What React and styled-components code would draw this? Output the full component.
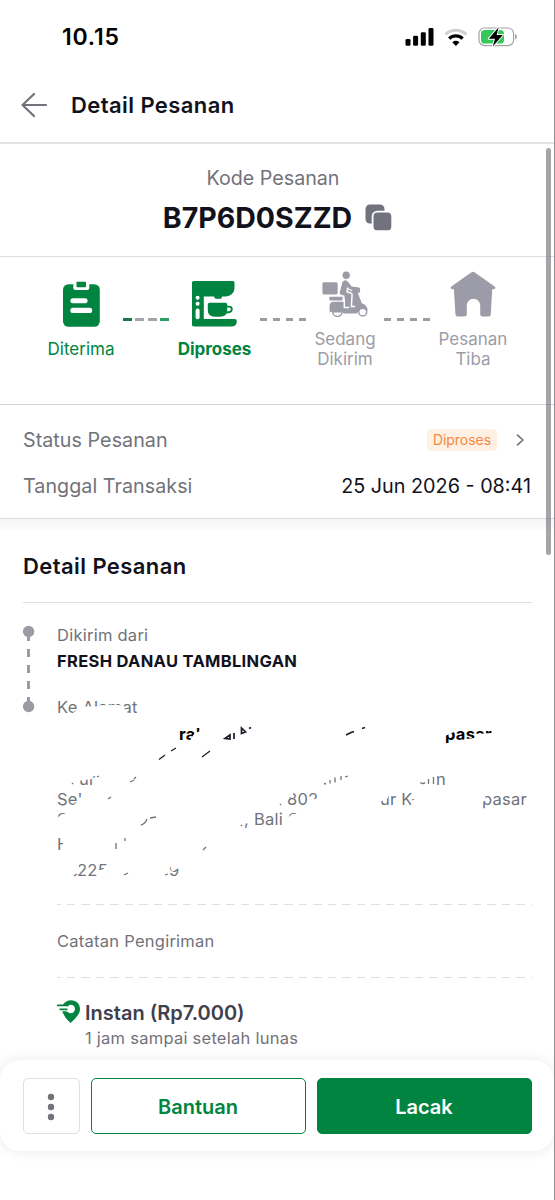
import styled, { createGlobalStyle, css } from "styled-components";

const GlobalStyle = createGlobalStyle`
  :root {
    --color-green: #00843f;
    --color-ink: #11121c;
    --color-grey: #71727a;
    --color-muted: #9c9ca8;
    --color-line: #e3e4e8;
  }

  * {
    box-sizing: border-box;
  }

  body {
    margin: 0;
    background: #fff;
    font-family: Inter, "Liberation Sans", sans-serif;
  }

  p, h1, h2 {
    margin: 0;
  }

  svg {
    display: block;
    flex: none;
  }
`;

const Screen = styled.div`
  position: relative;
  display: flex;
  flex-direction: column;
  width: 555px;
  height: 1200px;
  overflow: hidden;
  border-right: 1px solid #8f8f91;
  background: #fff;
`;

const StatusBar = styled.div`
  display: flex;
  justify-content: space-between;
  align-items: center;
  height: 74px;
  padding: 0 37px 0 62px;
`;

const Clock = styled.p`
  font-size: 23px;
  font-weight: 600;
  letter-spacing: 0.8px;
  color: #000;
`;

const Header = styled.header`
  display: flex;
  align-items: center;
  column-gap: 23px;
  height: 70px;
  padding: 0 21px 6px;
  border-bottom: 2px solid var(--color-line);
`;

const Title = styled.h1`
  font-size: 22px;
  font-weight: 600;
  letter-spacing: 0.42px;
  line-height: 28px;
  color: var(--color-ink);
`;

const CodePanel = styled.section`
  display: flex;
  flex-direction: column;
  align-items: center;
  height: 113px;
  padding-top: 22px;
  border-bottom: 1px solid #dddee2;
`;

const CodeLabel = styled.p`
  padding-right: 8px;
  font-size: 19.7px;
  line-height: 25px;
  color: var(--color-grey);
`;

const CodeRow = styled.div`
  display: flex;
  align-items: center;
  column-gap: 13px;
  margin-top: 9px;
  padding-left: 2px;
`;

const Code = styled.p`
  font-size: 28.5px;
  font-weight: 700;
  line-height: 36px;
  color: var(--color-ink);
`;

const Steps = styled.section`
  display: flex;
  align-items: center;
  height: 148px;
  padding: 0 0 22px 39px;
  border-bottom: 1px solid #d5d5d8;
`;

const Step = styled.div`
  display: flex;
  flex-direction: column;
  align-items: center;
  row-gap: 12px;
  flex: 0 0 ${(props) => props.$width}px;
  color: ${(props) =>
    props.$reached ? "var(--color-green)" : "var(--color-muted)"};
`;

const StepLabel = styled.p`
  font-size: 17px;
  line-height: 20px;
  text-align: center;
  white-space: pre;
  font-weight: ${(props) => (props.$current ? 700 : 400)};
`;

const Connector = styled.div`
  display: flex;
  justify-content: space-between;
  flex: 0 0 46px;
`;

const Dash = styled.span`
  width: ${(props) => (props.$wide ? 9 : 6.5)}px;
  height: 3px;
  background: ${(props) => props.$color};
`;

const InfoPanel = styled.section`
  display: flex;
  flex-direction: column;
  row-gap: 22px;
  height: 114px;
  padding: 23px 23px 0;
  border-bottom: 1px solid #d9d9dc;
`;

const InfoRow = styled.div`
  display: flex;
  align-items: center;
  justify-content: space-between;
  height: 24px;
`;

const InfoLabel = styled.p`
  font-size: 19.7px;
  letter-spacing: 0.05px;
  color: var(--color-grey);
`;

const InfoValue = styled.p`
  font-size: 19.8px;
  color: var(--color-ink);
`;

const StatusLink = styled.div`
  display: flex;
  align-items: center;
  column-gap: 19px;
  padding-right: 7px;
`;

const Badge = styled.span`
  padding: 0 6px;
  border-radius: 4px;
  background: #fff0e4;
  color: #f5893d;
  font-size: 14px;
  letter-spacing: -0.05px;
  line-height: 22px;
`;

const Divider = styled.div`
  height: 11px;
  background: linear-gradient(#f6f6f7, #fbfbfb);
`;

const Details = styled.section`
  flex: 1;
  padding: 22px 22px 0 23px;
`;

const SectionTitle = styled.h2`
  height: 51px;
  border-bottom: 1px solid #dedfe2;
  font-size: 22px;
  font-weight: 600;
  letter-spacing: 0.42px;
  line-height: 29px;
  color: var(--color-ink);
`;

const Route = styled.div`
  display: flex;
  padding-top: 22px;
`;

const RouteLine = styled.div`
  flex: 0 0 34px;
`;

const RouteBody = styled.div`
  flex: 1;
`;

const Caption = styled.p`
  font-size: 16.5px;
  letter-spacing: 0.25px;
  line-height: 20px;
  color: var(--color-grey);
`;

const Store = styled.p`
  margin: 6px 0 26px;
  font-size: 16.5px;
  font-weight: 700;
  letter-spacing: 0.32px;
  line-height: 20px;
  color: var(--color-ink);
`;

const Address = styled.div`
  position: relative;
  height: 207px;
`;

const AddressLine = styled.div`
  display: grid;
  grid-template-columns: ${(props) => props.$columns};
  height: 20px;
  margin-top: ${(props) => props.$gap || 0}px;
  font-size: 16.5px;
  letter-spacing: 0.25px;
  line-height: 20px;
  white-space: nowrap;
  color: var(--color-grey);

  ${(props) =>
    props.$strong &&
    css`
      font-weight: 700;
      color: #000;
    `}
`;

const Part = styled.span`
  grid-column: ${(props) => props.$col};
`;

const Scribble = styled.svg`
  position: absolute;
  left: 0;
  top: 0;
`;

const DashedRule = styled.div`
  height: 1px;
  background: repeating-linear-gradient(
    90deg,
    #dfdfe2 0 3.7px,
    transparent 3.7px 9.9px,
    #dfdfe2 9.9px 14.5px
  );
`;

const Note = styled(Caption)`
  padding: 26px 0;
`;

const Delivery = styled.div`
  display: flex;
  column-gap: 4px;
  padding-top: 22px;
`;

const DeliveryName = styled.p`
  margin-bottom: 2px;
  font-size: 20px;
  font-weight: 600;
  line-height: 26px;
  color: #3f404c;
`;

const Footer = styled.footer`
  position: relative;
  display: flex;
  column-gap: 11px;
  height: 91px;
  margin-bottom: 49px;
  padding: 18px 22px 0 23px;
  border-radius: 20px;
  background: #fff;
  box-shadow: 0 0 14px rgba(0, 0, 0, 0.09);
`;

const Button = styled.button`
  display: flex;
  align-items: center;
  justify-content: center;
  flex: 1;
  height: 56px;
  padding: 1px 1px 0 0;
  border: 1.5px solid var(--color-green);
  border-radius: 5px;
  background: #fff;
  color: var(--color-green);
  font-family: inherit;
  font-size: 20px;
  font-weight: 600;

  ${(props) =>
    props.$filled &&
    css`
      background: var(--color-green);
      color: #fff;
    `}

  ${(props) =>
    props.$square &&
    css`
      flex: 0 0 57px;
      border-color: #dfdfe5;
      color: var(--color-grey);
    `}
`;

const ScrollThumb = styled.div`
  position: absolute;
  top: 148px;
  right: 3px;
  width: 5px;
  height: 407px;
  border-radius: 3px;
  background: rgba(110, 110, 115, 0.62);
`;

function StatusIcons() {
  return (
    <svg width="113" height="22" viewBox="404 26 113 22">
      <rect x="405.5" y="39" width="5" height="6.8" rx="1.3" />
      <rect x="413.1" y="35.8" width="5" height="10" rx="1.3" />
      <rect x="420.8" y="32.2" width="5" height="13.6" rx="1.3" />
      <rect x="428.5" y="28" width="5" height="17.8" rx="1.3" />
      <g fill="none" strokeWidth="3">
        <path d="M445.5 34.4a15 15 0 0 1 20.8 0" stroke="#cfcfcf" />
        <path d="M449.2 38.6a9.6 9.6 0 0 1 13.4 0" stroke="#000" strokeWidth="3.2" />
      </g>
      <path d="M452.3 42.2q3.6-2.8 7.2 0l-3.6 3.8z" />
      <rect x="479" y="28" width="34.6" height="17.6" rx="5.5" fill="#fff" stroke="#a3a3a5" strokeWidth="1.2" />
      <path d="M515 34v5.6q1.9-.8 1.9-2.8t-1.9-2.8z" fill="#a3a3a5" />
      <rect x="481" y="30" width="23" height="13.6" rx="3.7" fill="#34c759" />
      <path
        d="M498.7 27.3l-10 11.4h6.3l-2.2 7.7 10-11.5h-6.2z"
        stroke="#fff"
        strokeWidth="2"
        strokeLinejoin="round"
        paintOrder="stroke"
      />
    </svg>
  );
}

function BackIcon() {
  return (
    <svg width="27" height="26" viewBox="0 0 27 26" fill="none" stroke="#71727a" strokeWidth="2.2" strokeLinecap="round" strokeLinejoin="round">
      <path d="M25 13H1.5M13 2L1.5 13 13 24" />
    </svg>
  );
}

function CopyIcon() {
  return (
    <svg width="28" height="28" viewBox="0 0 28 28" fill="#71727e">
      <rect x="0.5" y="0.5" width="19" height="19" rx="4.5" />
      <rect x="7.6" y="7.6" width="19.6" height="19.6" rx="4.8" stroke="#fff" strokeWidth="1.8" />
    </svg>
  );
}

function ClipboardIcon() {
  return (
    <svg width="46" height="46" viewBox="0 0 46 46" fill="currentColor">
      <rect x="5" y="3.2" width="36.8" height="42.6" rx="5.5" />
      <g fill="#fff">
        <rect x="15.3" y="-1" width="16" height="10" rx="2" />
        <rect x="12.4" y="17.3" width="17.2" height="5" rx="2.5" />
        <rect x="12.4" y="26.8" width="21.8" height="5.2" rx="2.6" />
      </g>
      <rect x="18.5" y="0.8" width="9.5" height="5.4" rx="0.7" />
    </svg>
  );
}

function CoffeeMachineIcon() {
  return (
    <svg width="46" height="46" viewBox="0.5 0 46 46" fill="currentColor">
      <path d="M3 0H41.5Q43 0 43 1.5V6.5C43 12 39 15.5 34 15.5H30.5V16Q30.5 17.7 28.8 17.7H24.5Q22.8 17.7 22.8 16V15.5H12.3V38H43Q45.5 38 45.3 40.5Q45 45.6 40 45.6H3Q0 45.6 0 42.6V3Q0 0 3 0z" />
      <g fill="#fff">
        <circle cx="6.1" cy="16.7" r="2" />
        <circle cx="6.1" cy="22.8" r="2" />
        <rect x="4.1" y="27.4" width="4" height="10.8" rx="2" />
      </g>
      <path d="M18 21.7H34Q35.7 21.7 35.7 23.4V29Q35.7 35.8 28.5 35.8H23.5Q16.3 35.8 16.3 29V23.4Q16.3 21.7 18 21.7z" />
      <path d="M35 25.6H37.5Q40.3 25.6 40.3 28.3T37 31.3L34.5 31.5" fill="none" stroke="currentColor" strokeWidth="1.9" />
    </svg>
  );
}

function ScooterIcon() {
  return (
    <svg width="46" height="46" viewBox="0 0 46 46" fill="currentColor">
      <circle cx="24.2" cy="4.3" r="3.7" />
      <rect x="0.4" y="11.2" width="15.3" height="12.2" rx="1.6" />
      <rect x="7.3" y="25.7" width="13.3" height="3.7" rx="0.8" />
      <path d="M20.5 11Q22.5 8 25.3 10L29.6 15.4 37 16.6Q38.4 17 38.2 19L37.8 21.8H35.8L39.8 32.3Q45.3 34 45.7 39.5L44.5 40.5H36L35 42.5H21.5L20.5 40.5H9.8L7.6 41.5V35Q7.6 30.8 12 30.8H22L22.6 24.8 18.5 23.6Q17.4 23 17.7 21.5z" />
      <path d="M25.8 16.5L25 20.7 29.5 22.4Q30.3 23 30 25L29.4 35.5H33.2M22.3 27.3V36.5H27.2" fill="none" stroke="#fff" strokeWidth="1.5" />
      <path d="M25.3 17.5l4.9 2.2" stroke="#fff" strokeWidth="1.2" />
      <g fill="#fff" stroke="currentColor" strokeWidth="1.5">
        <path d="M10.7 40.7A4.7 4.7 0 0 0 20.1 40.7z" />
        <circle cx="40.7" cy="41" r="4" />
      </g>
      <path d="M35.5 41Q37.5 35 44.5 38" fill="none" stroke="currentColor" strokeWidth="2.2" />
    </svg>
  );
}

function HouseIcon() {
  return (
    <svg width="46" height="46" viewBox="0 0 46 46" fill="currentColor">
      <path d="M21.2 1.5Q23 .2 24.8 1.5L44.7 15.5Q45.6 16.2 45.2 17.2T43.5 18.3H42.2L40.8 43Q40.6 45.6 38 45.6H32.5Q30.2 45.6 30.2 43.3V34.5A6.7 6.7 0 0 0 16.8 34.5V43.3Q16.8 45.6 14.5 45.6H8.2Q5.6 45.6 5.4 43L3.9 18.3H2.5Q1.2 18.3 .8 17.2T1.3 15.5z" />
    </svg>
  );
}

function RouteIcon() {
  return (
    <svg width="12" height="88" viewBox="0 0 12 88">
      <path d="M5.5 8V16M5.5 24V32M5.5 40V48M5.5 56V64M5.5 72V80" stroke="#9a9ba5" strokeWidth="3" />
      <circle cx="5.6" cy="6.5" r="5.7" fill="#9a9ba5" />
      <circle cx="5.6" cy="81.5" r="5.7" fill="#9a9ba5" />
    </svg>
  );
}

function PinIcon() {
  return (
    <svg width="24" height="24" viewBox="0 0 24 24">
      <path d="M6 4.6C8.5 1.5 11 .3 14 .3 19.5.3 23 4.2 23 9c0 5.3-4.5 9.3-9.5 14C10.5 20 7.5 17 6 13z" fill="#00843f" />
      <circle cx="13.8" cy="9" r="4.2" fill="#fff" />
      <path d="M0 5H10.5V12H4" fill="#fff" />
      <path d="M0 5.4H11.5M2.5 9.4H10.5" stroke="#00843f" strokeWidth="1.9" />
      <path d="M5.5 12H9.5" stroke="#00843f" strokeWidth="1.5" />
    </svg>
  );
}

// white pen strokes over the lines, plus the slivers left between them
function AddressCover() {
  return (
    <Scribble width="475" height="207" viewBox="57 697 475 207">
      <g fill="#fff">
        <path d="M70 715L77 710 78 706.5H97L100 705.3 118 705 124 706 124 708 128 713V716z" />
        <path d="M190 744L191 738 195 733 201 731V744z" />
        <path d="M440 752V744L449 743 456 741 466 739 474 738 477 734 498 732.5V752z" />
        <path d="M440 724H457V729L454 732 444 736.5z" />
        <path d="M76 771H97L92 779 78 781z" />
        <path d="M67 809L78 802 83 800V809z" />
        <path d="M284 792H293V796L288 798 284 802zM309 800L320 798V810H306z" />
        <path d="M378 792H389L388 798 380 802zM413 800L418 797.5V808H410z" />
        <path d="M478 792H484L486 800 481 803z" />
        <path d="M62 814H72V832H56V819z" />
        <path d="M292 814H300V830H286V820z" />
        <path d="M63 836H74V856H63z" />
        <path d="M66 862H78L80 870 76 872zM99 872L107 866V880H99z" />
        <path d="M168 860H182V866L172 872z" />
      </g>
      <g fill="none" stroke="#1b1c25" strokeWidth="1.7">
        <path d="M225 738.5l5-3.5v4zM234 739v-6M241.5 733.5v-5.5l4 4zM249 728.5l2-1" />
        <path d="M346 735l5-2.5 3-1M362 728.5l3-1" />
        <path d="M159 759.5l6-4.5M171 751l5-3M202 757l8-6" strokeWidth="1.2" />
      </g>
      <g fill="none" stroke="#71727a" strokeWidth="1.3">
        <path d="M72 784l1-1M97 777l2-1M130 782l4-2M134 779l2-2M108 799l3-2" />
        <path d="M324 784l2-.5M330 783.5v-3.5M335 782.5v-5M341 780v-4M345 777l3-1" />
        <path d="M420 782.5q3 2 5 0M428.5 784v-5M433.5 784v-7M280 804l1 1" />
        <path d="M141 825q4-1 6-6M150 818l6-1M241 825l1 1" />
        <path d="M116 849v-6M125 841v-3M203 850l3-3M124 875l4-2M165 875l3-1M74 876l3-2" />
      </g>
    </Scribble>
  );
}

function App() {
  return (
    <>
      <GlobalStyle />
      <Screen>
        <StatusBar>
          <Clock>10.15</Clock>
          <StatusIcons />
        </StatusBar>

        <Header>
          <BackIcon />
          <Title>Detail Pesanan</Title>
        </Header>

        <CodePanel>
          <CodeLabel>Kode Pesanan</CodeLabel>
          <CodeRow>
            <Code>B7P6D0SZZD</Code>
            <CopyIcon />
          </CodeRow>
        </CodePanel>

        <Steps>
          <Step $width={84} $reached>
            <ClipboardIcon />
            <StepLabel>Diterima</StepLabel>
          </Step>
          <Connector>
            <Dash $wide $color="#127a48" />
            <Dash $wide $color="#a5a4ab" />
            <Dash $wide $color="#a5a4ab" />
            <Dash $wide $color="#27a163" />
          </Connector>
          <Step $width={91} $reached>
            <CoffeeMachineIcon />
            <StepLabel $current>Diproses</StepLabel>
          </Step>
          <Connector>
            {[0, 1, 2, 3].map((i) => (
              <Dash key={i} $color="#9c9ca3" />
            ))}
          </Connector>
          <Step $width={78}>
            <ScooterIcon />
            <StepLabel>{"Sedang\nDikirim"}</StepLabel>
          </Step>
          <Connector>
            {[0, 1, 2, 3].map((i) => (
              <Dash key={i} $color="#9c9ca3" />
            ))}
          </Connector>
          <Step $width={86}>
            <HouseIcon />
            <StepLabel>{"Pesanan\nTiba"}</StepLabel>
          </Step>
        </Steps>

        <InfoPanel>
          <InfoRow>
            <InfoLabel>Status Pesanan</InfoLabel>
            <StatusLink>
              <Badge>Diproses</Badge>
              <svg width="8" height="12" viewBox="0 0 8 12" fill="none" stroke="#71727a" strokeWidth="1.6">
                <path d="M1 .7L6.8 6 1 11.3" />
              </svg>
            </StatusLink>
          </InfoRow>
          <InfoRow>
            <InfoLabel>Tanggal Transaksi</InfoLabel>
            <InfoValue>25 Jun 2026 - 08:41</InfoValue>
          </InfoRow>
        </InfoPanel>

        <Divider />

        <Details>
          <SectionTitle>Detail Pesanan</SectionTitle>
          <Route>
            <RouteLine>
              <RouteIcon />
            </RouteLine>
            <RouteBody>
              <Caption>Dikirim dari</Caption>
              <Store>FRESH DANAU TAMBLINGAN</Store>

              <Address>
                <AddressLine $columns="1fr">
                  <Part>Ke Alamat</Part>
                </AddressLine>
                <AddressLine $strong $gap={7} $columns="122px 266px auto">
                  <Part $col={2}>ra'</Part>
                  <Part $col={3}>pasar</Part>
                </AddressLine>
                <AddressLine $gap={25} $columns="22px 357px auto">
                  <Part $col={2}>ur</Part>
                  <Part $col={3}>n</Part>
                </AddressLine>
                <AddressLine $columns="230px 93px 102px auto">
                  <Part>Se'</Part>
                  <Part $col={2}>802</Part>
                  <Part $col={3}>ur K-</Part>
                  <Part $col={4}>pasar</Part>
                </AddressLine>
                <AddressLine $columns="187px 44px auto">
                  <Part>S</Part>
                  <Part $col={2}>, Bali</Part>
                  <Part $col={3}>S</Part>
                </AddressLine>
                <AddressLine $gap={5} $columns="1fr">
                  <Part>H</Part>
                </AddressLine>
                <AddressLine $gap={6} $columns="20px 92px auto">
                  <Part $col={2}>225</Part>
                  <Part $col={3}>9</Part>
                </AddressLine>
                <AddressCover />
              </Address>

              <DashedRule />
              <Note>Catatan Pengiriman</Note>
              <DashedRule />

              <Delivery>
                <PinIcon />
                <div>
                  <DeliveryName>Instan (Rp7.000)</DeliveryName>
                  <Caption>1 jam sampai setelah lunas</Caption>
                </div>
              </Delivery>
            </RouteBody>
          </Route>
        </Details>

        <Footer>
          <Button $square>
            <svg width="8" height="28" viewBox="0 0 8 28" fill="currentColor">
              <circle cx="4" cy="4" r="3.2" />
              <circle cx="4" cy="14" r="3.2" />
              <circle cx="4" cy="24" r="3.2" />
            </svg>
          </Button>
          <Button>Bantuan</Button>
          <Button $filled>Lacak</Button>
        </Footer>

        <ScrollThumb />
      </Screen>
    </>
  );
}

export default App;
